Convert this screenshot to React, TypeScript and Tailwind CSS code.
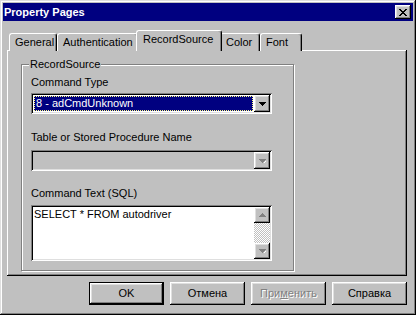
import React from 'react'

const raised =
  'shadow-[inset_-1px_-1px_#000,inset_1px_1px_#fff,inset_-2px_-2px_#808080,inset_2px_2px_#dfdfdf]'
const sunken =
  'shadow-[inset_1px_1px_#808080,inset_-1px_-1px_#fff,inset_2px_2px_#000,inset_-2px_-2px_#dfdfdf]'

function Arrow({ up = false, disabled = false }: { up?: boolean; disabled?: boolean }) {
  const fill = disabled ? '#808080' : '#000'
  return (
    <svg width="7" height="4" viewBox="0 0 7 4" className="block" shapeRendering="crispEdges">
      {disabled && !up && <path d="M4 4h1v-1h1v-1h1v1h-1v1h-1v1h-1z" fill="#fff" />}
      {up ? (
        <path d="M3 0h1v1h1v1h1v1h1v1H0V3h1V2h1V1h1z" fill={fill} />
      ) : (
        <path d="M0 0h7v1H6v1H5v1H4v1H3V3H2V2H1V1H0z" fill={fill} />
      )}
    </svg>
  )
}

function ScrollButton({ up = false, disabled = false, h = 'h-[18px]' }: { up?: boolean; disabled?: boolean; h?: string }) {
  return (
    <div className={`flex w-[16px] ${h} items-center justify-center bg-[#c0c0c0] ${raised}`}>
      <Arrow up={up} disabled={disabled} />
    </div>
  )
}

function Tab({ label, w, active = false }: { label: string; w: string; active?: boolean }) {
  return (
    <div
      className={`relative flex ${w} items-start rounded-t-[3px] border-l border-t border-r border-l-white border-t-white border-r-black bg-[#c0c0c0] shadow-[inset_-1px_0_#808080] ${
        active ? 'z-10 -mx-[2px] h-[21px] pl-[6px] pt-[2px]' : 'h-[18px] pl-[5px] pt-[2px]'
      }`}
    >
      <span className="leading-[13px]">{label}</span>
    </div>
  )
}

function Button({ label, isDefault = false, disabled = false }: { label: string; isDefault?: boolean; disabled?: boolean }) {
  return (
    <div
      className={`flex h-[23px] w-[75px] items-center justify-center bg-[#c0c0c0] ${
        isDefault
          ? 'border border-black shadow-[inset_-1px_-1px_#000,inset_1px_1px_#fff,inset_-2px_-2px_#808080,inset_2px_2px_#dfdfdf]'
          : raised
      }`}
    >
      {disabled ? (
        <span className="text-[#808080] [text-shadow:1px_1px_#fff]">
          При<span className="underline">м</span>енить
        </span>
      ) : (
        <span>{label}</span>
      )}
    </div>
  )
}

export default function App() {
  return (
    <div
      className="relative h-[315px] w-[416px] overflow-hidden bg-[#c0c0c0] p-[3px] text-[11px] leading-[13px] text-black shadow-[inset_-1px_-1px_#000,inset_1px_1px_#dfdfdf,inset_-2px_-2px_#808080,inset_2px_2px_#fff]"
      style={{ fontFamily: '"Liberation Sans", Arial, sans-serif' }}
    >
      {/* title bar */}
      <div className="flex h-[18px] items-center justify-between bg-[#000080] pl-[1px] pr-[2px]">
        <span className="text-[11px] font-bold text-white">Property Pages</span>
        <div className={`flex h-[14px] w-[16px] items-center justify-center bg-[#c0c0c0] ${raised}`}>
          <svg width="8" height="7" viewBox="0 0 8 7" shapeRendering="crispEdges">
            <path
              d="M0 0h2v1h1v1h2V1h1V0h2v1H7v1H6v1H5v1h1v1h1v1h1v1H6V6H5V5H3v1H2v1H0V6h1V5h1V4h1V3H2V2H1V1H0z"
              fill="#000"
            />
          </svg>
        </div>
      </div>

      {/* tabs */}
      <div className="mt-[9px] flex h-[21px] items-end pl-[6px]">
        <Tab label="General" w="w-[48px]" />
        <Tab label="Authentication" w="w-[81px]" />
        <Tab label="RecordSource" w="w-[86px]" active />
        <Tab label="Color" w="w-[40px]" />
        <Tab label="Font" w="w-[42px]" />
      </div>

      {/* page */}
      <div
        className="ml-[4px] -mt-[1px] h-[226px] w-[400px] bg-[#c0c0c0] pl-[14px] pt-[14px] shadow-[inset_-1px_-1px_#000,inset_1px_1px_#fff,inset_-2px_-2px_#808080]"
      >
        <div className="relative h-[207px] w-[273px] border border-[#808080] pl-[9px] shadow-[inset_1px_1px_#fff,1px_1px_#fff]">
          <span className="absolute -top-[7px] left-[7px] bg-[#c0c0c0] px-[1px]">RecordSource</span>

          <div className="mt-[11px]">Command Type</div>
          <div className={`mt-[4px] flex h-[21px] w-[241px] items-center bg-white p-[2px] ${sunken}`}>
            <div className="flex h-full flex-1 items-center pl-[1px] pr-[1px]">
              <div className="flex h-[15px] flex-1 items-center border border-dotted border-[#ffff80] bg-[#000080] pl-[1px] text-white">
                8 - adCmdUnknown
              </div>
            </div>
            <ScrollButton h="h-[17px]" />
          </div>

          <div className="mt-[17px]">Table or Stored Procedure Name</div>
          <div className={`mt-[6px] flex h-[21px] w-[241px] items-center justify-end bg-[#c0c0c0] p-[2px] ${sunken}`}>
            <ScrollButton h="h-[17px]" disabled />
          </div>

          <div className="mt-[16px]">Command Text (SQL)</div>
          <div className={`mt-[5px] flex h-[56px] w-[241px] bg-white p-[2px] ${sunken}`}>
            <div className="flex-1 pl-[1px] pt-[1px]">SELECT * FROM autodriver</div>
            <div className="flex w-[16px] flex-col">
              <ScrollButton up h="h-[16px]" disabled />
              <div className="flex-1 bg-[repeating-conic-gradient(#fff_0_25%,#c0c0c0_0_50%)] bg-[length:2px_2px]" />
              <ScrollButton h="h-[16px]" disabled />
            </div>
          </div>
        </div>
      </div>

      {/* buttons */}
      <div className="mt-[6px] flex justify-end gap-[6px] pr-[6px]">
        <Button label="OK" isDefault />
        <Button label="Отмена" />
        <Button label="Применить" disabled />
        <Button label="Справка" />
      </div>
    </div>
  )
}
